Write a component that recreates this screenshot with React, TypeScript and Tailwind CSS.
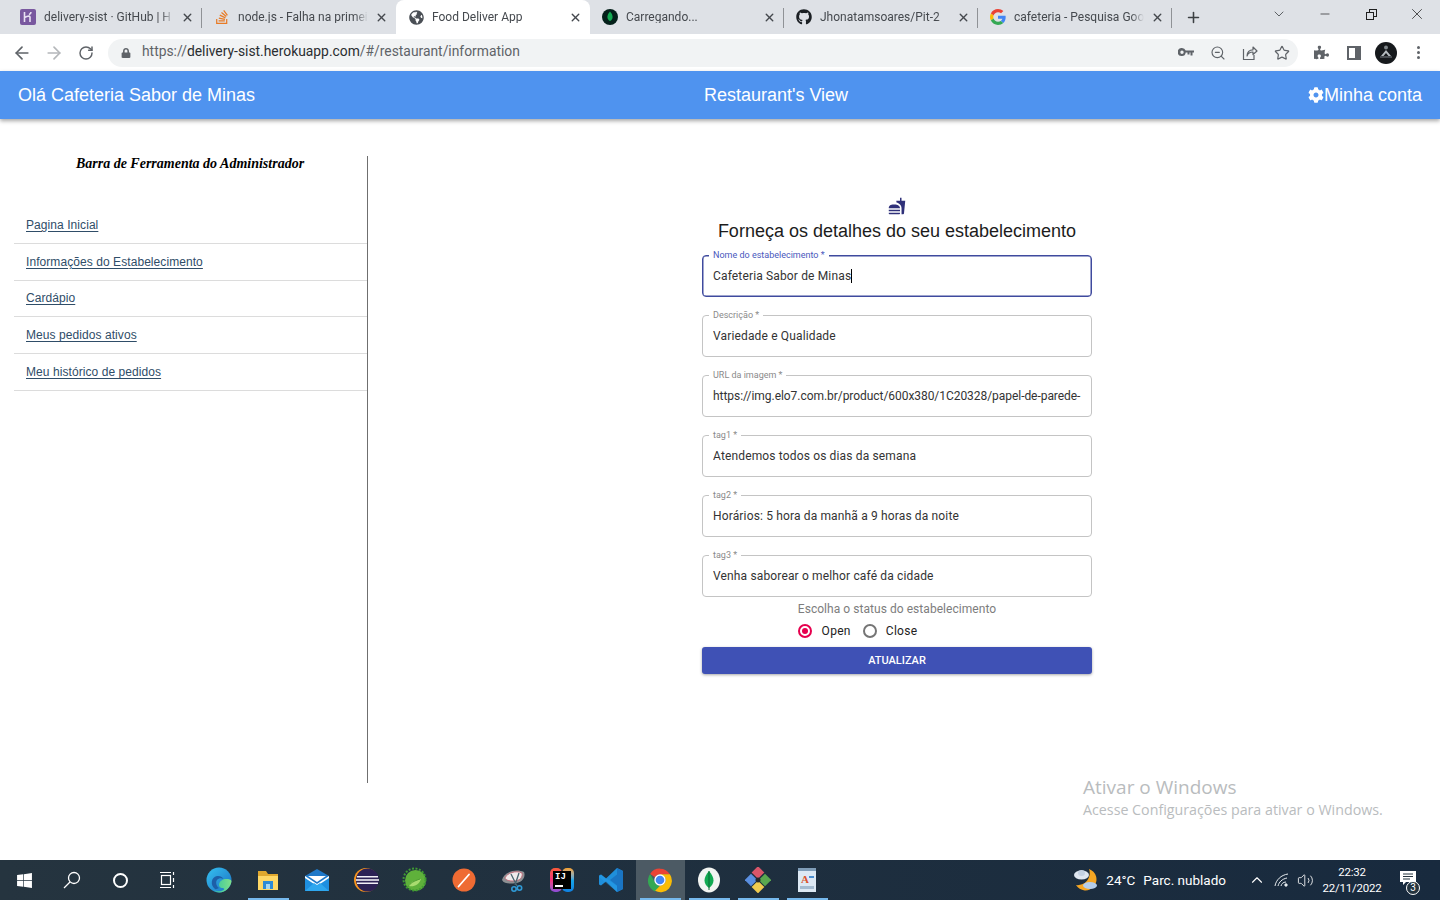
import React from "react";
import { ArrowLeft, ArrowRight, RotateCw, ZoomOut, Star, X, Plus, ChevronDown, Minus, ChevronUp, Volume2 } from "lucide-react";
import { FaCog, FaGithub, FaStackOverflow, FaGlobeAmericas, FaLock, FaPuzzlePiece, FaWindows } from "react-icons/fa";

const chromeFont = "[font-family:Roboto,'Open_Sans',sans-serif]";

function Heroku() {
  return (
    <svg width="16" height="16" viewBox="0 0 16 16">
      <rect width="16" height="16" rx="2" fill="#79589f" />
      <path d="M4.5 3v10M4.5 8.5c2-1.3 5-2 5.5-.5v5M11 3c0 1.2-.8 2-2 2.6" stroke="#e8e0f2" strokeWidth="1.6" fill="none" />
    </svg>
  );
}

function GoogleG() {
  return (
    <svg width="16" height="16" viewBox="0 0 48 48">
      <path fill="#EA4335" d="M24 9.5c3.5 0 6.7 1.2 9.2 3.6l6.9-6.9C35.9 2.4 30.5 0 24 0 14.6 0 6.5 5.4 2.6 13.2l8 6.2C12.5 13.7 17.8 9.5 24 9.5z" />
      <path fill="#4285F4" d="M47 24.5c0-1.6-.1-3.1-.4-4.5H24v9h13c-.6 3-2.2 5.5-4.8 7.2l7.7 6c4.5-4.2 7.1-10.3 7.1-17.7z" />
      <path fill="#FBBC05" d="M10.6 28.6c-.5-1.4-.8-3-.8-4.6s.3-3.2.8-4.6l-8-6.2C.9 16.5 0 20.1 0 24s.9 7.5 2.6 10.8l8-6.2z" />
      <path fill="#34A853" d="M24 48c6.5 0 11.9-2.1 15.9-5.8l-7.7-6c-2.2 1.4-4.9 2.3-8.2 2.3-6.2 0-11.5-4.2-13.4-9.9l-8 6.2C6.5 42.6 14.6 48 24 48z" />
    </svg>
  );
}

function MongoDot({ size = 16 }: { size?: number }) {
  return (
    <svg width={size} height={size} viewBox="0 0 16 16">
      <circle cx="8" cy="8" r="8" fill="#04201a" />
      <path d="M8 2.5c1.8 2 2.6 3.7 2.6 5.5 0 2-1.2 3.4-2.6 4-1.4-.6-2.6-2-2.6-4 0-1.8.8-3.5 2.6-5.5z" fill="#13aa52" />
    </svg>
  );
}

const tabs = [
  { title: "delivery-sist · GitHub | H", icon: <Heroku /> },
  { title: "node.js - Falha na primei", icon: <FaStackOverflow size={16} color="#e87b26" /> },
  { title: "Food Deliver App", icon: <FaGlobeAmericas size={15} color="#4a4f55" />, active: true },
  { title: "Carregando...", icon: <MongoDot /> },
  { title: "Jhonatamsoares/Pit-2", icon: <FaGithub size={16} color="#1b1f23" /> },
  { title: "cafeteria - Pesquisa Goo", icon: <GoogleG /> },
];

function BrowserTabs() {
  return (
    <div className={`h-[34px] bg-[#dee1e6] flex items-end pl-[8px] ${chromeFont}`}>
      {tabs.map((t, i) => (
        <div
          key={t.title}
          className={`relative w-[194px] h-[34px] flex items-center pl-[12px] pr-[8px] gap-[8px] rounded-t-lg ${t.active ? "bg-white" : ""}`}
        >
          <span className="w-[16px] h-[16px] flex items-center justify-center shrink-0">{t.icon}</span>
          <span className="flex-1 text-[12px] leading-none text-[#45494e] whitespace-nowrap overflow-hidden [mask-image:linear-gradient(to_right,black_90%,transparent)]">
            {t.title}
          </span>
          <X size={13} strokeWidth={2.6} color="#44484d" className="shrink-0 -ml-[1px]" />
          {!t.active && i !== 1 && (
            <span className="absolute right-0 top-[8px] h-[20px] w-px bg-[#8f9296]" />
          )}
        </div>
      ))}
      <div className="h-[34px] w-[42px] flex items-center justify-center">
        <Plus size={17} strokeWidth={2.2} color="#3c4043" />
      </div>
      <div className="flex-1 flex items-center justify-end h-[34px] pb-[6px]">
        <ChevronDown size={16} strokeWidth={1.2} color="#3c4043" className="mr-[31px]" />
        <Minus size={14} strokeWidth={1.2} color="#1f1f1f" className="mr-[34px]" />
        <span className="relative w-[11px] h-[11px] mr-[31px]">
          <span className="absolute right-0 top-0 w-[8px] h-[8px] border border-[#1f1f1f]" />
          <span className="absolute left-0 bottom-0 w-[8px] h-[8px] border border-[#1f1f1f] bg-[#dee1e6]" />
        </span>
        <X size={18} strokeWidth={1} color="#1f1f1f" className="mr-[14px]" />
      </div>
    </div>
  );
}

function SidePanelIcon() {
  return (
    <span className="w-[14px] h-[14px] ml-[2px] -mr-[2px] border-2 border-[#5f6368] flex justify-end">
      <span className="w-[4px] h-full bg-[#5f6368]" />
    </span>
  );
}

function Avatar() {
  return (
    <svg width="22" height="22" viewBox="0 0 22 22">
      <circle cx="11" cy="11" r="11" fill="#16191c" />
      <circle cx="11" cy="5.5" r="2" fill="#7f868b" />
      <path d="M11 8l5 6h-2.5L11 11l-2.5 3H6z" fill="#b6bcc0" />
      <rect x="5" y="14.5" width="12" height="1" fill="#7a8085" />
    </svg>
  );
}

function KeyIcon() {
  return (
    <svg width="16" height="9" viewBox="0 0 16 9" fill="#5f6368">
      <path fillRule="evenodd" d="M4 0a4 4 0 0 1 3.7 2.5H16v2h-1.5v3h-2v-3h-1v2h-2v-2H7.700A4 4 0 1 1 4 0zm0 2.500a1.700 1.700 0 1 0 0 3.400 1.700 1.700 0 0 0 0-3.400z" />
    </svg>
  );
}

function ShareIcon() {
  return (
    <svg width="16" height="16" viewBox="0 0 16 16" fill="none" stroke="#5f6368" strokeWidth="1.2">
      <path d="M1.5 4v10.500h10.500V10" />
      <path d="M5 11c0-4 2.500-6.200 6-6.200V2l4 4-4 3.500V7c-3 0-5 1-6 4z" strokeLinejoin="round" />
    </svg>
  );
}

function Toolbar() {
  return (
    <div className={`h-[37px] bg-white flex items-center ${chromeFont}`}>
      <div className="w-[108px] flex items-center pl-[12px] gap-[12px]">
        <ArrowLeft size={20} strokeWidth={2} color="#5f6368" />
        <ArrowRight size={20} strokeWidth={2} color="#b4b7ba" />
        <RotateCw size={16} strokeWidth={2.2} color="#5f6368" className="ml-[2px]" />
      </div>
      <div className="w-[1190px] h-[28px] rounded-full bg-[#f1f3f4] flex items-center pl-[13px]">
        <FaLock size={10} color="#5f6368" />
        <span className="ml-[11px] mb-[2px] text-[13.85px] leading-none text-[#5f6368] whitespace-nowrap">
          https://<span className="text-[#2a2d30]">delivery-sist.herokuapp.com</span>/#/restaurant/information
        </span>
        <div className="ml-auto flex items-center pr-[8px] gap-[16px]">
          <KeyIcon />
          <ZoomOut size={16} strokeWidth={1.7} color="#5f6368" />
          <ShareIcon />
          <Star size={16} strokeWidth={1.8} color="#5f6368" />
        </div>
      </div>
      <div className="flex-1 flex items-center pl-[16px] gap-[16px]">
        <FaPuzzlePiece size={15} color="#5f6368" />
        <SidePanelIcon />
        <Avatar />
        <span className="ml-[4px] flex flex-col gap-[2px]">
          <span className="w-[3px] h-[3px] rounded-full bg-[#5f6368]" />
          <span className="w-[3px] h-[3px] rounded-full bg-[#5f6368]" />
          <span className="w-[3px] h-[3px] rounded-full bg-[#5f6368]" />
        </span>
      </div>
    </div>
  );
}

function AppBar() {
  return (
    <div className="h-[48px] bg-[#4f93ef] shadow-[0_2px_4px_rgba(0,0,0,0.35)] relative flex items-center justify-between pl-[18px] pr-[18px] text-white text-[18px] [font-family:'Liberation_Sans',Arial,sans-serif]">
      <span className="w-[400px]">Olá Cafeteria Sabor de Minas</span>
      <span className="ml-[112px]">Restaurant's View</span>
      <span className="w-[400px] flex items-center justify-end">
        <FaCog size={16} />
        Minha conta
      </span>
    </div>
  );
}

const links = ["Pagina Inicial", "Informações do Estabelecimento", "Cardápio", "Meus pedidos ativos", "Meu histórico de pedidos"];

function Sidebar() {
  return (
    <aside className="ml-[14px] mt-[37px] w-[354px] h-[627px] border-r border-[#6f6f6f] shrink-0">
      <h2 className="h-[16px] text-center text-[14px] leading-[16px] font-bold italic text-black pr-[1px] [font-family:'Liberation_Serif',serif]">
        Barra de Ferramenta do Administrador
      </h2>
      <nav className="mt-[35px] [font-family:'Liberation_Sans',Arial,sans-serif]">
        {links.map((l) => (
          <div key={l} className="h-[36.8px] border-b border-[#dcdcdc] flex items-center pl-[12px]">
            <a className="text-[12px] leading-none tracking-[0.07px] underline underline-offset-2 text-[#2f4d68]">{l}</a>
          </div>
        ))}
      </nav>
    </aside>
  );
}

function Field({ label, value, focused, caret, tight }: { label: string; value: string; focused?: boolean; caret?: boolean; tight?: boolean }) {
  return (
    <div
      className={`relative h-[42px] rounded-[4px] flex items-center pl-[10px] pr-[10px] border ${
        focused ? "border-[#3f4a9e] shadow-[inset_0_0_0_0.5px_#3f4a9e]" : "border-[#c4c4c4]"
      }`}
    >
      <span
        className={`absolute left-[6px] top-[-6px] bg-white px-[4px] text-[9px] leading-[11px] ${
          focused ? "text-[#4a58bd]" : "text-[#8a8a8a]"
        }`}
      >
        {label} *
      </span>
      <span
        className={`flex-1 overflow-hidden whitespace-nowrap text-[12px] leading-[16px] text-[#333] ${
          tight ? "tracking-[-0.05px]" : "tracking-[0.15px]"
        }`}
      >
        {value}
        {caret && <span className="inline-block w-px h-[14px] bg-black align-[-3px]" />}
      </span>
    </div>
  );
}

function FastFood() {
  return (
    <svg width="18" height="18" viewBox="0 0 24 24" fill="#2f3079">
      <path d="M18.06 22.99h1.66c.84 0 1.53-.64 1.63-1.46L23 5.05h-5V1h-1.97v4.05h-4.97l.3 2.34c1.71.47 3.31 1.32 4.27 2.26 1.44 1.42 2.43 2.89 2.43 5.29v8.05zM1 21.99V21h15.03v.99c0 .55-.45 1-1.01 1H2.01c-.56 0-1.01-.45-1.01-1zm15.03-7c0-4.5-6.31-5-7.1-5-3.8 0-7.93.5-7.93 5h15.03zM1.02 17h15v2h-15z" />
    </svg>
  );
}

function Form() {
  const fields = [
    { label: "Descrição", value: "Variedade e Qualidade" },
    { label: "URL da imagem", value: "https://img.elo7.com.br/product/600x380/1C20328/papel-de-parede-", tight: true },
    { label: "tag1", value: "Atendemos todos os dias da semana" },
    { label: "tag2", value: "Horários: 5 hora da manhã a 9 horas da noite" },
    { label: "tag3", value: "Venha saborear o melhor café da cidade" },
  ];
  return (
    <section className="ml-[334px] mt-[78px] w-[390px] flex flex-col [font-family:Roboto,Arial,sans-serif]">
      <div className="flex justify-center h-[18px]">
        <FastFood />
      </div>
      <h1 className="mt-[3px] h-[37px] text-center text-[18px] leading-[27px] text-[#1c1c1c] [font-family:'Liberation_Sans',Arial,sans-serif]">
        Forneça os detalhes do seu estabelecimento
      </h1>
      <div className="flex flex-col gap-[18px]">
        <Field label="Nome do estabelecimento" value="Cafeteria Sabor de Minas" focused caret />
        {fields.map((f) => (
          <Field key={f.label} {...f} />
        ))}
      </div>
      <p className="mt-[5px] text-center text-[12px] leading-[14px] tracking-[0.05px] text-[#7d7d7d]">
        Escolha o status do estabelecimento
      </p>
      <div className="mt-[7px] h-[16px] flex items-center justify-center text-[12px] tracking-[0.3px] text-[#222] pr-[79px]">
        <span className="w-[14px] h-[14px] rounded-full border-2 border-[#e6004e] flex items-center justify-center">
          <span className="w-[6px] h-[6px] rounded-full bg-[#e6004e]" />
        </span>
        <span className="ml-[10px]">Open</span>
        <span className="ml-[12px] w-[14px] h-[14px] rounded-full border-2 border-[#757575]" />
        <span className="ml-[9px]">Close</span>
      </div>
      <button className="mt-[8px] h-[27px] pt-[1px] rounded-[3px] bg-[#3f51b5] text-white text-[11px] font-medium shadow-[0_1px_3px_rgba(0,0,0,0.35)]">
        ATUALIZAR
      </button>
    </section>
  );
}

function Edge() {
  return (
    <svg width="26" height="26" viewBox="0 0 26 26">
      <defs>
        <linearGradient id="e1" x1="0" y1="0" x2="1" y2="1">
          <stop offset="0" stopColor="#35c1f1" />
          <stop offset="1" stopColor="#1b6fc1" />
        </linearGradient>
        <linearGradient id="e2" x1="0" y1="0" x2="1" y2="0">
          <stop offset="0" stopColor="#36c5a0" />
          <stop offset="1" stopColor="#7fe08a" />
        </linearGradient>
      </defs>
      <circle cx="13" cy="13" r="12.5" fill="url(#e1)" />
      <path d="M25.5 14c-.5 6-6 11.5-12 11.5-2.5 0-4.5-1-5.5-2.5 3 2 7 1.5 9.5 0 1.5-1 .5-2-1-2-2 0-4-1.5-3.5-4 .8-3 4-5 7-5 3 0 5 .5 5.5 2z" fill="url(#e2)" />
      <path d="M9 22C4 18 5 10 11 9c3-.5 6 1 6.5 3-2-1.5-5-1-6.5 1-1.5 2-1 6 2 8-1.5 1-3 1.5-4 1z" fill="#1d5fa8" />
    </svg>
  );
}

function Explorer() {
  return (
    <svg width="24" height="24" viewBox="0 0 24 24">
      <path d="M2 3h8l2 3h10v16H2z" fill="#e0a82e" />
      <rect x="2" y="8" width="20" height="14" fill="#ffd866" />
      <rect x="7" y="13" width="10" height="8" fill="#2e8bd6" />
      <rect x="10" y="16" width="4" height="5" fill="#a5d7f4" />
    </svg>
  );
}

function Mail() {
  return (
    <svg width="24" height="24" viewBox="0 0 24 24">
      <rect x="0" y="8" width="24" height="15" fill="#1e8fe0" />
      <path d="M0 8l12-7 12 7-12 8z" fill="#1f78c8" />
      <path d="M3 8h18l-9 6z" fill="#ffffff" />
      <path d="M0 8l12 8 12-8v2L12 18 0 10z" fill="#ffffff" />
      <path d="M0 23l9-8 3 2 3-2 9 8z" fill="#2ea7ef" />
    </svg>
  );
}

function Eclipse() {
  return (
    <svg width="26" height="26" viewBox="0 0 26 26">
      <circle cx="13" cy="13" r="12" fill="#f7941e" />
      <circle cx="14.5" cy="13" r="11.5" fill="#2c2255" />
      <rect x="4" y="9" width="21" height="1.5" fill="#f2f0f7" />
      <rect x="3" y="12.2" width="23" height="1.6" fill="#f2f0f7" />
      <rect x="4" y="15.5" width="21" height="1.5" fill="#f2f0f7" />
    </svg>
  );
}

function Spring() {
  return (
    <svg width="26" height="26" viewBox="0 0 26 26">
      <circle cx="13.5" cy="13.5" r="10.5" fill="#5fb13b" />
      <circle cx="12.5" cy="12.5" r="11" fill="none" stroke="#3f9a33" strokeWidth="2" strokeDasharray="2 1.5" />
      <path d="M7 19c5 1 10-1 12-7-3 1-4 1-7 2-3 1-5 3-5 5z" fill="#a8dc6f" />
      <path d="M6 20c2-4 6-6 12-8" stroke="#4f9e33" strokeWidth="1" fill="none" />
    </svg>
  );
}

function Postman() {
  return (
    <svg width="24" height="24" viewBox="0 0 24 24">
      <circle cx="12" cy="12" r="11.5" fill="#ef6b33" />
      <path d="M6.5 18.5L17 6.5" stroke="#fff" strokeWidth="1.8" strokeLinecap="round" />
    </svg>
  );
}

function Snip() {
  return (
    <svg width="26" height="26" viewBox="0 0 26 26">
      <path d="M2 13C4 5 16 1 24 5c2 5-2 10-8 11S4 17 2 13z" fill="#8d8f92" />
      <path d="M5 11C7 6 16 3 22 6c1 4-2 8-8 8s-8-1-9-3z" fill="#f0ecec" stroke="#c25a6c" strokeWidth="0.8" />
      <path d="M11 7l6 12M19 6l-4 12" stroke="#4a6570" strokeWidth="1.3" />
      <circle cx="14" cy="22" r="2.2" fill="none" stroke="#2f9ad6" strokeWidth="1.6" />
      <circle cx="19.5" cy="21" r="2.2" fill="none" stroke="#2f9ad6" strokeWidth="1.6" />
    </svg>
  );
}

function Idea() {
  return (
    <span className="relative w-[24px] h-[26px] block">
      <span className="absolute left-0 top-[1px] w-[12px] h-[24px] rounded-[5px] bg-linear-to-b from-[#fb5a34] via-[#f2307a] to-[#8a4bd8]" />
      <span className="absolute right-0 top-[1px] w-[12px] h-[24px] rounded-[5px] bg-linear-to-b from-[#f9a11b] via-[#19a6e8] to-[#0f7fe0]" />
      <span className="absolute left-[3px] top-[4px] w-[18px] h-[18px] bg-black text-white text-[9px] leading-[10px] font-bold pl-[2px] pt-[1px] [font-family:'Liberation_Mono',monospace]">
        IJ
        <span className="absolute left-[2px] bottom-[2px] w-[8px] h-[2px] bg-white" />
      </span>
    </span>
  );
}

function VSCode() {
  return (
    <svg width="26" height="26" viewBox="0 0 26 26">
      <path d="M19 1l6 3v18l-6 3L8 14.5 3 18.5 1 17.5V8.5l2-1 5 4z" fill="#1f8fdb" />
      <path d="M19 1l6 3v18l-6 3zM19 7.5L12 13l7 5.5z" fill="#1a75c4" />
      <path d="M3 7.5l16 11.5v6L1 10z" fill="#2aa3ef" opacity="0.4" />
    </svg>
  );
}

function Chrome() {
  return (
    <svg width="26" height="26" viewBox="0 0 48 48">
      <path d="M24 3a21 21 0 0 1 18.2 10.5H24a10.5 10.5 0 0 0-9.1 5.25L5.8 13A21 21 0 0 1 24 3z" fill="#ea4335" />
      <path d="M5.8 13l9.1 15.75A10.5 10.5 0 0 0 24 34.5L15 45A21 21 0 0 1 5.8 13z" fill="#34a853" />
      <path d="M42.2 13.5A21 21 0 0 1 15 44l9-9.5a10.5 10.5 0 0 0 9.1-15.75L24 13.5z" fill="#fbbc05" />
      <circle cx="24" cy="24" r="10.5" fill="#fff" />
      <circle cx="24" cy="24" r="8" fill="#4285f4" />
    </svg>
  );
}

function MongoApp() {
  return (
    <svg width="24" height="26" viewBox="0 0 24 26">
      <ellipse cx="12" cy="13" rx="11" ry="12.5" fill="#f3f5f2" />
      <path d="M12 4c3 3.5 4.5 6.5 4.5 9.5 0 3.5-2 5.5-4.5 7.5-2.5-2-4.5-4-4.5-7.5C7.5 10.5 9 7.5 12 4z" fill="#13aa52" />
      <path d="M11.5 4h1v19h-1z" fill="#0b6b34" />
    </svg>
  );
}

function Sourcetree() {
  return (
    <svg width="26" height="26" viewBox="0 0 26 26">
      <rect x="8.5" y="1" width="9" height="9" transform="rotate(45 13 5.5)" fill="#d9566a" />
      <rect x="1.5" y="8.5" width="9" height="9" transform="rotate(45 6 13)" fill="#5a8fe0" />
      <rect x="15.5" y="8.5" width="9" height="9" transform="rotate(45 20 13)" fill="#5aa84f" />
      <rect x="8.5" y="15.5" width="9" height="9" transform="rotate(45 13 20)" fill="#f0cb4f" />
      <circle cx="13" cy="13" r="2.5" fill="#23282c" />
    </svg>
  );
}

function Wordpad() {
  return (
    <span className="relative block w-[18px] h-[24px] bg-[#dde9f4] border-t-[3px] border-[#7f9db8]">
      <span className="absolute left-[3px] top-[3px] text-[11px] leading-none font-bold text-[#d9532c] [font-family:'Liberation_Serif',serif]">A</span>
      <span className="absolute right-[2px] top-[5px] w-[5px] h-[2px] bg-[#4b8fd0]" />
      <span className="absolute left-[2px] right-[2px] bottom-[3px] h-[3px] bg-[#a5bcd1]" />
    </span>
  );
}

const apps: { key: string; node: React.ReactNode; run?: boolean; active?: boolean }[] = [
  { key: "edge", node: <Edge /> },
  { key: "files", node: <Explorer />, run: true },
  { key: "mail", node: <Mail /> },
  { key: "eclipse", node: <Eclipse /> },
  { key: "spring", node: <Spring /> },
  { key: "postman", node: <Postman /> },
  { key: "snip", node: <Snip /> },
  { key: "idea", node: <Idea /> },
  { key: "vscode", node: <VSCode /> },
  { key: "chrome", node: <Chrome />, run: true, active: true },
  { key: "mongo", node: <MongoApp />, run: true },
  { key: "tree", node: <Sourcetree />, run: true },
  { key: "word", node: <Wordpad />, run: true },
];

function Taskbar() {
  return (
    <div className="absolute left-0 right-0 bottom-0 h-[40px] bg-linear-to-r from-[#25343f] to-[#182a3e] flex items-center text-white [font-family:Roboto,'Open_Sans',sans-serif]">
      <div className="w-[48px] flex justify-center">
        <FaWindows size={17} color="#fff" />
      </div>
      <div className="w-[48px] flex justify-center">
        <svg width="18" height="18" viewBox="0 0 18 18" fill="none" stroke="#fff" strokeWidth="1.3">
          <circle cx="11" cy="7" r="5.5" />
          <path d="M7 11l-6 6" />
        </svg>
      </div>
      <div className="w-[48px] flex justify-center">
        <span className="w-[15px] h-[15px] rounded-full border-2 border-white" />
      </div>
      <div className="w-[48px] flex justify-center">
        <svg width="18" height="18" viewBox="0 0 18 18" fill="none" stroke="#fff" strokeWidth="1.2">
          <rect x="2.5" y="4.5" width="9" height="9" />
          <path d="M1 1.5h11M1 16.5h11M14.5 1v3M14.5 7v4M14.5 14v3" />
        </svg>
      </div>
      <div className="ml-[2.5px] flex h-[40px]">
        {apps.map((a) => (
          <div
            key={a.key}
            className={`relative w-[49px] h-[40px] flex items-center justify-center ${a.active ? "bg-[#4c5a64]" : ""}`}
          >
            {a.node}
            {a.run && <span className="absolute left-[4px] right-[4px] bottom-0 h-[2px] bg-[#76b9ed]" />}
          </div>
        ))}
      </div>
      <div className="ml-auto flex items-center h-[40px] text-[13.5px]">
        <svg width="28" height="28" viewBox="0 0 28 28" className="mr-[6px]">
          <path d="M17 3a11 11 0 1 1-13 16 12 12 0 0 0 13-16z" fill="#f5a623" />
          <ellipse cx="9.5" cy="9" rx="7.5" ry="4.5" fill="#dfe6f0" />
          <ellipse cx="9.5" cy="7" rx="3.5" ry="3" fill="#c4d1e2" />
          <ellipse cx="18" cy="19.5" rx="7" ry="3.5" fill="#b4cdea" />
        </svg>
        <span>24°C</span>
        <span className="ml-[8px]">Parc. nublado</span>
        <ChevronUp size={18} strokeWidth={1.5} color="#fff" className="ml-[22px]" />
        <svg width="16" height="14" viewBox="0 0 16 14" fill="none" stroke="#e8edf0" strokeWidth="1" className="ml-[8px]">
          <path d="M1 13C2 7 7 2 14 1M4 13c1-4 4-7 9-8M7 13c.5-2 2-4 5-4" />
          <circle cx="12" cy="12" r="1.2" fill="#e8edf0" />
        </svg>
        <Volume2 size={17} strokeWidth={1.2} color="#fff" className="ml-[7px]" />
        <div className="w-[64px] ml-[6px] mb-[1px] flex flex-col items-center text-[11.5px] tracking-[-0.2px] leading-[16px]">
          <span>22:32</span>
          <span>22/11/2022</span>
        </div>
        <div className="relative w-[48px] h-[15px] mr-[8px] flex justify-center -translate-y-[2px]">
          <svg width="16" height="15" viewBox="0 0 16 15" fill="#fff">
            <path d="M0 0h16v11H6l-3 3v-3H0z" />
            <path d="M3 3h10M3 5.5h10M3 8h7" stroke="#25343f" strokeWidth="1" />
          </svg>
          <span className="absolute left-[22px] top-[10px] w-[14px] h-[14px] rounded-full border border-white bg-[#25343f] text-[10px] leading-[12px] text-center">3</span>
        </div>
      </div>
    </div>
  );
}

export default function App() {
  return (
    <div className="relative w-[1440px] h-[900px] overflow-hidden bg-white">
      <BrowserTabs />
      <Toolbar />
      <AppBar />
      <main className="flex">
        <Sidebar />
        <Form />
      </main>
      <div className="absolute left-[1083px] top-[776px] text-[#b9bcbe] [font-family:'Open_Sans',sans-serif]">
        <div className="text-[19px] leading-[22px]">Ativar o Windows</div>
        <div className="text-[14.25px] leading-[24px]">Acesse Configurações para ativar o Windows.</div>
      </div>
      <Taskbar />
    </div>
  );
}
